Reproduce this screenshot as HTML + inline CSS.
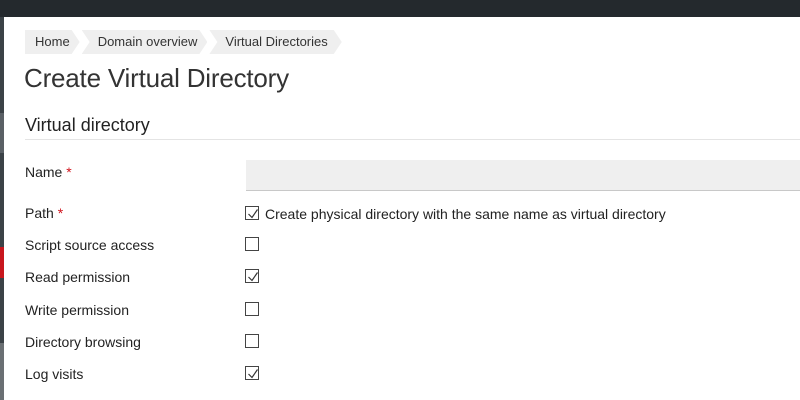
<!DOCTYPE html>
<html><head><style>
*{margin:0;padding:0;box-sizing:border-box}
body{width:800px;height:400px;overflow:hidden;background:#fff;font-family:"Liberation Sans",sans-serif;color:#222;position:relative}
.top{position:absolute;left:0;top:0;width:800px;height:17px;background:#24292d}
.side{position:absolute;left:0;top:17px;width:4px;height:383px;background:#3b4247}
.side .l1{position:absolute;top:96px;height:40px;width:4px;background:#5a6065}
.side .r{position:absolute;top:230px;height:31px;width:4px;background:#c8161d}
.side .l2{position:absolute;top:326px;height:57px;width:4px;background:#6a6f73}
.bc{position:absolute;top:30px;left:25px;height:24px;display:flex}
.bc div{height:24px;line-height:24px;font-size:13px;color:#333;background:#efefef;padding:0 10px;margin-right:2px;position:relative;clip-path:polygon(0 0,calc(100% - 8px) 0,100% 50%,calc(100% - 8px) 100%,0 100%,8px 50%)}
.bc div:first-child{clip-path:polygon(0 0,calc(100% - 8px) 0,100% 50%,calc(100% - 8px) 100%,0 100%)}
h1{position:absolute;left:24px;top:63px;font-size:26px;font-weight:normal;color:#333;letter-spacing:-0.2px}
h2{position:absolute;left:25px;top:115px;font-size:18px;font-weight:normal;color:#222}
.hr{position:absolute;left:25px;top:139px;width:775px;height:1px;background:#e4e4e4}
.lab{position:absolute;left:25px;font-size:14px;color:#222}
.lab b{color:#d0121b;font-weight:normal}
.inp{position:absolute;left:246px;top:160px;width:554px;height:31px;background:#efefef;border-bottom:1px solid #c8c8c8}
.cb{position:absolute;left:245px;width:14px;height:14px;border:1px solid #444;background:#fff}
.cb svg{position:absolute;left:1px;top:1px}
.txt{position:absolute;left:265px;top:206px;font-size:14px;color:#222}
</style></head><body>
<div class="top"></div>
<div class="side"><div class="l1"></div><div class="r"></div><div class="l2"></div></div>
<div class="bc"><div>Home</div><div style="padding-left:16px">Domain overview</div><div style="padding-left:16px;padding-right:14px">Virtual Directories</div></div>
<h1>Create Virtual Directory</h1>
<h2>Virtual directory</h2>
<div class="hr"></div>
<div class="lab" style="top:164px">Name <b>*</b></div>
<div class="inp"></div>
<div class="lab" style="top:205px">Path <b>*</b></div>
<div class="cb" style="top:206px"><svg width="12" height="12"><path d="M1.5 6 L5 9.5 L10.5 1.5" stroke="#333" stroke-width="1.2" fill="none"/></svg></div>
<div class="txt">Create physical directory with the same name as virtual directory</div>
<div class="lab" style="top:237px">Script source access</div>
<div class="cb" style="top:237px"></div>
<div class="lab" style="top:269px">Read permission</div>
<div class="cb" style="top:269px"><svg width="12" height="12"><path d="M1.5 6 L5 9.5 L10.5 1.5" stroke="#333" stroke-width="1.2" fill="none"/></svg></div>
<div class="lab" style="top:302px">Write permission</div>
<div class="cb" style="top:302px"></div>
<div class="lab" style="top:334px">Directory browsing</div>
<div class="cb" style="top:334px"></div>
<div class="lab" style="top:366px">Log visits</div>
<div class="cb" style="top:366px"><svg width="12" height="12"><path d="M1.5 6 L5 9.5 L10.5 1.5" stroke="#333" stroke-width="1.2" fill="none"/></svg></div>
</body></html>
